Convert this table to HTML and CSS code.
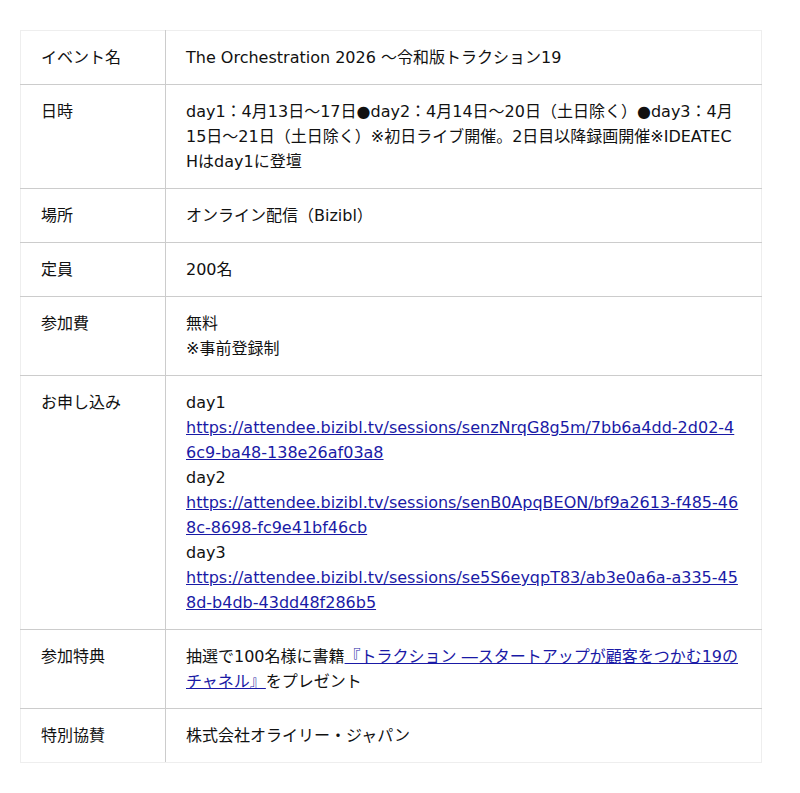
FILE: index.html
```html
<!DOCTYPE html>
<html>
<head>
    <title>The Orchestration 2026</title>
    <link rel="stylesheet" href="styles.css">
</head>
<body>

    <div class="container">
        <table class="event-table">
            <tr>
                <th>イベント名</th>
                <td>The Orchestration 2026 ～令和版トラクション19</td>
            </tr>
            <tr>
                <th>日時</th>
                <td>day1：4月13日～17日●day2：4月14日～20日（土日除く）●day3：4月15日～21日（土日除く）※初日ライブ開催。2日目以降録画開催※IDEATECHはday1に登壇</td>
            </tr>
            <tr>
                <th>場所</th>
                <td>オンライン配信（Bizibl）</td>
            </tr>
            <tr>
                <th>定員</th>
                <td>200名</td>
            </tr>
            <tr>
                <th>参加費</th>
                <td>無料<br>※事前登録制</td>
            </tr>
            <tr>
                <th>お申し込み</th>
                <td>
                    day1<br>
                    <a href="#">https://attendee.bizibl.tv/sessions/senzNrqG8g5m/7bb6a4dd-2d02-46c9-ba48-138e26af03a8</a><br>
                    day2<br>
                    <a href="#">https://attendee.bizibl.tv/sessions/senB0ApqBEON/bf9a2613-f485-468c-8698-fc9e41bf46cb</a><br>
                    day3<br>
                    <a href="#">https://attendee.bizibl.tv/sessions/se5S6eyqpT83/ab3e0a6a-a335-458d-b4db-43dd48f286b5</a>
                </td>
            </tr>
            <tr>
                <th>参加特典</th>
                <td>抽選で100名様に書籍<a href="#">『トラクション ―スタートアップが顧客をつかむ19のチャネル』</a>をプレゼント</td>
            </tr>
            <tr>
                <th>特別協賛</th>
                <td>株式会社オライリー・ジャパン</td>
            </tr>
        </table>
    </div>

</body>
</html>
```

FILE: styles.css
```css
body, html {
    margin: 0;
    background: #fff;
    font-family: "DejaVu Sans", "Noto Sans CJK JP", sans-serif;
    color: #111;
}

.container {
    padding: 30px 20px;
}

.event-table {
    width: 742px;
    border-collapse: collapse;
    border: 1px solid #eee;
    font-size: 16px;
    line-height: 25px;
}

.event-table th,
.event-table td {
    text-align: left;
    vertical-align: top;
    font-weight: normal;
    padding: 14px 20px;
    border-bottom: 1px solid #ccc;
    word-break: break-all;
}

.event-table th {
    width: 104px;
    padding-left: 20px;
    border-right: 1px solid #ccc;
}

.event-table td {
    padding-left: 20px;
    padding-right: 22px;
}

.event-table tr:last-child th,
.event-table tr:last-child td {
    border-bottom-color: #eee;
}

.event-table a {
    color: #1a1aa6;
}
```
